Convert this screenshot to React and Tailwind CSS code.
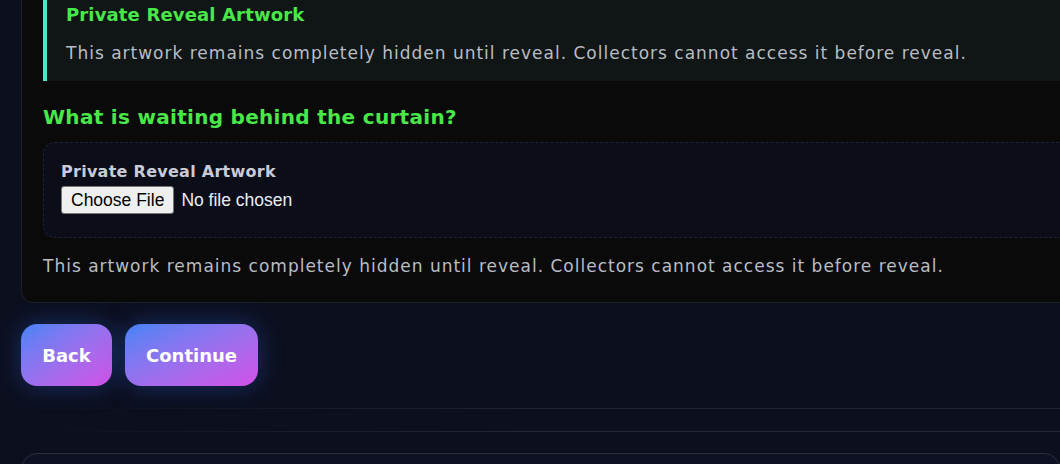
const FONT = { fontFamily: '"DejaVu Sans", "Open Sans", sans-serif' };

const COPY = 'This artwork remains completely hidden until reveal. Collectors cannot access it before reveal.';

const RevealStep = () => {
  return (
    <div className="h-[464px] overflow-hidden bg-[#0c0f1e] pl-[21px]" style={FONT}>
      <div className="w-[1100px] rounded-b-xl border border-t-0 border-[#1b2226] bg-[#0a0a0a] px-[21px] pb-6">
        <div className="border-l-4 border-[#4ae8c6] bg-[#0f1615] pl-[19px] pt-px pb-4">
          <h3 className="text-[18px] leading-7 font-bold tracking-[0.15px] text-[#49e849]">Private Reveal Artwork</h3>
          <p className="mt-3 text-[17px] leading-6 tracking-[1px] text-[#b9bdc3]">{COPY}</p>
        </div>

        <h2 className="mt-[22px] text-[20px] leading-7 font-bold tracking-[0.3px] text-[#49e849]">
          What is waiting behind the curtain?
        </h2>

        <div className="mt-[11px] h-[96px] rounded-xl border border-dashed border-[#1e2233] bg-[#0b0d19] px-[17px] pt-[17px]">
          <label className="block text-base leading-6 font-bold tracking-[0.27px] text-[#c9ccd8]">
            Private Reveal Artwork
          </label>
          <input
            type="file"
            className="mt-[2px] block text-[17.5px] leading-[22px] text-[#eceef4] file:mr-[7px] file:rounded-[3px] file:border file:border-[#767676] file:bg-[#efefef] file:px-[9px] file:py-[2px] file:text-black"
            style={{ fontFamily: '"Liberation Sans", Arial, sans-serif' }}
          />
        </div>

        <p className="mt-4 text-[17px] leading-6 tracking-[1px] text-[#b9bdc3]">{COPY}</p>
      </div>

      <div className="mt-[21px] flex gap-[13px]">
        <button className="h-[62px] w-[91px] rounded-2xl bg-linear-to-br from-[#3f83f6] to-[#d24ee6] text-[18px] font-bold text-white shadow-[0_0_26px_rgba(45,110,240,0.35)]">
          Back
        </button>
        <button className="h-[62px] w-[133px] rounded-2xl bg-linear-to-br from-[#3f83f6] to-[#d24ee6] text-[18px] font-bold text-white shadow-[0_0_26px_rgba(45,110,240,0.35)]">
          Continue
        </button>
      </div>

      <div className="mt-[22px] h-px bg-linear-to-r from-transparent via-[#1f2335] to-[#1f2335]" />
      <div className="mt-[22px] h-px bg-linear-to-r from-transparent via-[#23273a] to-[#23273a]" />
      <div className="mt-[21px] h-20 rounded-t-2xl border border-[#2a2e42] bg-[#0e1122]" />
    </div>
  );
};

export default function App() {
  return <RevealStep />;
}
